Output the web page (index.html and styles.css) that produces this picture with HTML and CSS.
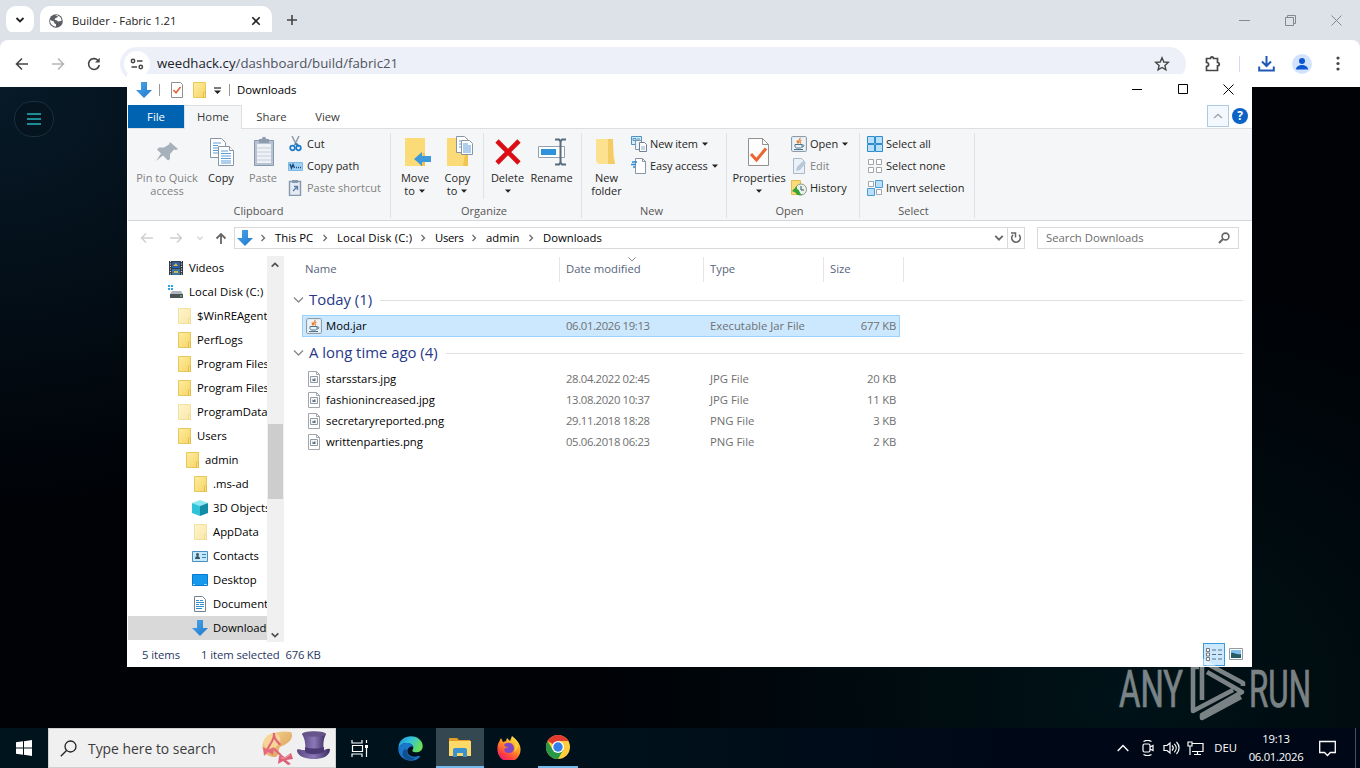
FILE: index.html
```html
<!DOCTYPE html>
<html lang="en">
<head>
<meta charset="utf-8">
<title>Builder - Fabric 1.21</title>
<link rel="stylesheet" href="styles.css">
</head>
<body>
<svg class="sprite" width="0" height="0">
  <defs>
    <linearGradient id="gFolder" x1="0" y1="0" x2="1" y2="1"><stop offset="0" stop-color="#ffeda3"/><stop offset="1" stop-color="#f6d463"/></linearGradient>
    <linearGradient id="gArrow" x1="0" y1="0" x2="1" y2="1"><stop offset="0" stop-color="#4ba6ea"/><stop offset="1" stop-color="#1f78cc"/></linearGradient>
    <linearGradient id="gEdge" x1="0" y1="0" x2="1" y2=".4"><stop offset="0" stop-color="#1b8fd8"/><stop offset=".5" stop-color="#31c2dc"/><stop offset="1" stop-color="#6be05a"/></linearGradient>
    <linearGradient id="gFox" x1=".8" y1="0" x2=".2" y2="1"><stop offset="0" stop-color="#fff04a"/><stop offset=".4" stop-color="#ff9a26"/><stop offset=".75" stop-color="#ff4040"/><stop offset="1" stop-color="#e3167c"/></linearGradient>
    <linearGradient id="gHat" x1="0" y1="0" x2="1" y2="0"><stop offset="0" stop-color="#5a4880"/><stop offset=".5" stop-color="#8c78b8"/><stop offset="1" stop-color="#3d2e60"/></linearGradient>
    <linearGradient id="gStraw" x1="0" y1="0" x2="1" y2="1"><stop offset="0" stop-color="#f8d999"/><stop offset="1" stop-color="#d79a4e"/></linearGradient>
  </defs>
  <symbol id="down" viewBox="0 0 16 16"><path d="M5 0h6v8h5l-8 8-8-8h5z" fill="url(#gArrow)"/></symbol>
  <symbol id="folder" viewBox="0 0 16 16"><path d="M2.500.5h12v15h-12z" fill="url(#gFolder)" stroke="#e9c85a"/><path d="M14.500 9.500l-2 1v5h2z" fill="#fbe28a" stroke="#dcb53c" stroke-width=".8"/></symbol>
  <symbol id="java" viewBox="0 0 16 16"><rect x=".6" y=".6" width="14.8" height="14.8" rx="1" fill="#eef3f7" stroke="#8193a3"/><path d="M9 1.700c1 2-3 2.800-1.400 5.600M10.500 4c-2 1-2 2-.6 3.500M6.500 4.500c-1 1 0 2 .5 3" fill="none" stroke="#e48230" stroke-width="1.200"/><path d="M4 8.500h7v2c0 1-1 1.500-2 1.500H6c-1 0-2-.5-2-1.500zM11 9c3-.5 2 2.200 0 2M3 13.500h9" fill="none" stroke="#4b7390"/></symbol>
  <symbol id="imgfile" viewBox="0 0 16 16"><path d="M2.500.5h8l3 3v12h-11z" fill="#fff" stroke="#a0a6ab"/><path d="M10.500.5v3h3" fill="none" stroke="#a0a6ab"/><path d="M4.500 5.500h7v6h-7z" fill="#f5f7f8" stroke="#919aa3"/><path d="M6.500 10V7.500l1.500 1V7.500h1.500V10z" fill="#60707e"/></symbol>
  <symbol id="caret" viewBox="0 0 7 4"><path d="M0 .5h6L3 3.800z" fill="#222"/></symbol>
  <symbol id="chev" viewBox="0 0 10 10"><path d="M3.500 2L6.500 5l-3 3" fill="none" stroke="#6b6b6b" stroke-width="1.300"/></symbol>
  <symbol id="drop" viewBox="0 0 12 12"><path d="M1 3.500L5.500 8 10 3.500" fill="none" stroke="currentColor" stroke-width="1.300"/></symbol>
</svg>

<div class="screen">
  <header class="tabs">
    <div class="tabsearch"><svg width="12" height="12" viewBox="0 0 12 12"><path d="M2.500 4L6 7.500 9.500 4" fill="none" stroke="#222" stroke-width="1.800"/></svg></div>
    <div class="tab">
      <svg class="globe" width="14" height="14" viewBox="0 0 14 14"><circle cx="7" cy="7" r="6.800" fill="#5a5d61"/><path d="M1 6l4 1.500.5 2L7 10v2.500C3.500 12.500 1 10 1 6zM6 2l3-.5c-.5 1.500-.5 2-2 2.500S5 6 6.500 6 8 7 9 7.500 11 6.500 12.600 7c0-3-1.500-5-4.600-5.500z" fill="#fff"/></svg>
      <span>Builder - Fabric 1.21</span>
      <svg class="tabclose" width="10" height="10" viewBox="0 0 10 10"><path d="M1.300 1.300l7.400 7.400M8.700 1.300L1.300 8.700" stroke="#222" stroke-width="1.600"/></svg>
    </div>
    <svg class="plus" width="12" height="12" viewBox="0 0 12 12"><path d="M6 1v10M1 6h10" stroke="#444" stroke-width="1.600"/></svg>
    <div class="caption">
      <svg width="11" height="11" viewBox="0 0 11 11"><path d="M0 5.500h11" stroke="#85898f"/></svg>
      <svg width="11" height="11" viewBox="0 0 11 11"><path d="M.5 2.500h8v8h-8zM2.500 2.500v-2h8v8h-2" fill="none" stroke="#85898f"/></svg>
      <svg width="11" height="11" viewBox="0 0 11 11"><path d="M.5.5l10 10M10.500.5l-10 10" stroke="#85898f"/></svg>
    </div>
  </header>
  <div class="toolbar">
    <svg width="14" height="14" viewBox="0 0 14 14"><path d="M13 7H2M7 1.500L1.500 7 7 12.500" fill="none" stroke="#444746" stroke-width="1.600"/></svg>
    <svg width="14" height="14" viewBox="0 0 14 14"><path d="M1 7h11M7 1.500L12.500 7 7 12.500" fill="none" stroke="#b5b7b8" stroke-width="1.600"/></svg>
    <svg width="14" height="14" viewBox="0 0 14 14"><path d="M12.300 8A5.400 5.400 0 1 1 10.800 3.200L12 4.500" fill="none" stroke="#444746" stroke-width="1.600"/><path d="M12.700.8v4.700H8z" fill="#444746"/></svg>
    <div class="omni">
      <div class="site"><svg width="14" height="12" viewBox="0 0 14 12"><g fill="none" stroke="#444746" stroke-width="1.500"><circle cx="3" cy="3" r="1.700"/><path d="M7 3h5.500M1.500 9H7"/><circle cx="10.800" cy="9" r="1.700"/></g></svg></div>
      <span class="url"><b>weedhack.cy</b>/dashboard/build/fabric21</span>
      <svg class="star" width="16" height="16" viewBox="0 0 16 16"><path d="M8 1.800l1.800 4.200 4.500.4-3.400 3 1 4.500L8 11.500l-3.900 2.400 1-4.500-3.400-3L6.200 6z" fill="none" stroke="#444746" stroke-width="1.400"/></svg>
    </div>
    <svg class="ext" width="18" height="18" viewBox="0 0 18 18"><path d="M2.500 3.500h4c0-2.300 3-2.300 3 0h4v4c2.400 0 2.400 3.300 0 3.300v4.700h-11v-4c2.800-.3 2.800-3.800 0-4z" fill="none" stroke="#444746" stroke-width="1.700"/></svg>
    <i class="bar"></i>
    <svg class="dl" width="17" height="17" viewBox="0 0 17 17"><path d="M8.500 1v9.500M4 6.500l4.500 4.500L13 6.500M1.200 11.500v4h14.600v-4" fill="none" stroke="#1f59b5" stroke-width="2"/></svg>
    <div class="avatar"><svg width="14" height="14" viewBox="0 0 14 14"><circle cx="7" cy="4" r="3" fill="#0b57d0"/><path d="M1 12.500c0-6 12-6 12 0z" fill="#0b57d0"/></svg></div>
    <svg class="dots" width="4" height="16" viewBox="0 0 4 16"><g fill="#444746"><circle cx="2" cy="2" r="1.600"/><circle cx="2" cy="7.500" r="1.600"/><circle cx="2" cy="13" r="1.600"/></g></svg>
  </div>

  <main class="page">
    <div class="menu"><svg width="14" height="12" viewBox="0 0 14 12"><path d="M0 1h14M0 6h14M0 11h14" stroke="#25b5c0" stroke-width="1.600"/></svg></div>
  </main>

  <section class="window">
    <div class="titlebar">
      <svg width="16" height="16"><use href="#down"/></svg><i></i>
      <svg class="t1" width="14" height="16" viewBox="0 0 14 16"><path d="M1.500.5h9l2 2v13h-11z" fill="#fff" stroke="#8f8f8f"/><path d="M3.500 8l2.500 2.700L10.500 5" fill="none" stroke="#e0623d" stroke-width="1.600"/></svg>
      <svg class="t2" width="16" height="16"><use href="#folder"/></svg>
      <svg class="t3" width="7" height="8" viewBox="0 0 7 8"><path d="M0 1h7" stroke="#222" stroke-width="1.200"/><path d="M0 3.500h7L3.500 7z" fill="#222"/></svg><i></i>
      <span>Downloads</span>
      <div class="caption wcap">
        <svg width="11" height="11" viewBox="0 0 11 11"><path d="M1 5.500h10" stroke="#000"/></svg>
        <svg width="11" height="11" viewBox="0 0 11 11"><path d="M1.500.5h9v9h-9z" fill="none" stroke="#000"/></svg>
        <svg width="11" height="11" viewBox="0 0 11 11"><path d="M.5.500l10 10M10.500.5l-10 10" stroke="#000"/></svg>
      </div>
    </div>
    <nav class="rtabs">
      <span class="file">File</span><span class="home">Home</span><span class="share">Share</span><span class="view">View</span>
      <div class="collapse"><svg width="10" height="6" viewBox="0 0 10 6"><path d="M1 5l4-3.500L9 5" fill="none" stroke="#9ba7b3" stroke-width="1.400"/></svg></div>
      <div class="help">?</div>
    </nav>
    <div class="ribbon">
      <div class="group g1">
        <div class="tools">
          <div class="big dim w66"><svg width="32" height="34" viewBox="0 0 32 34"><path d="M19 7l8 7-2 1-2-.5-4 4.500v5l-2 1.500-5-5L5 26l5-7.500-4-4 2-2h5l5-3z" fill="#a7b1bc"/></svg>Pin to Quick<br>access</div>
          <div class="big w42"><svg width="32" height="34" viewBox="0 0 32 34"><g fill="#fff" stroke="#8795a5"><path d="M5.500 3.500h11l4 4v15h-15z"/><path d="M13.500 11.500h11l4 4v15h-15z"/><path d="M24.500 11.500v4h4" /></g><path d="M8 8h8M8 10.500h5M8 13h5M8 15.500h5M8 18h5M16 16h7M16 18.500h10M16 21h10M16 23.500h10M16 26h10M16 28h10" stroke="#5c9ddb"/></svg>Copy</div>
          <div class="big dim w42"><svg width="32" height="34" viewBox="0 0 32 34"><path d="M7.500 5.500h19v25h-19z" fill="#b7c3d2" stroke="#8797ad"/><path d="M10 9h14v19H10z" fill="#eef1f6"/><path d="M10 13h14M10 17h14M10 21h14M10 25h14" stroke="#c3ceda"/><path d="M12 4h3c0-3 4-3 4 0h3v4H12z" fill="#8c9bb0"/></svg>Paste</div>
          <div class="smalls s1">
            <div><svg width="16" height="16" viewBox="0 0 16 16"><path d="M4 0l5 10M11 0L6 10" stroke="#8a98a6" stroke-width="1.400"/><path d="M7 8l2 0 2 2.500" stroke="#1979ca" fill="none" stroke-width="1.600"/><circle cx="4.500" cy="12" r="2.300" fill="none" stroke="#1979ca" stroke-width="1.700"/><circle cx="10.500" cy="12" r="2.300" fill="none" stroke="#1979ca" stroke-width="1.700"/></svg>Cut</div>
            <div><svg width="16" height="16" viewBox="0 0 16 16"><path d="M.5 4.500h14v8H.5z" fill="#9fd0f3" stroke="#7fb8e4"/><path d="M2 6l1.500 4L5 6.500 6.500 10M8 9.500h1M10 9.500h1M12 9.500h1" fill="none" stroke="#174d7b" stroke-width="1.400"/></svg>Copy path</div>
            <div class="dim"><svg width="16" height="16" viewBox="0 0 16 16"><path d="M1.500 1.500h11v14h-11z" fill="#e5ebf2" stroke="#8797ad" stroke-width="1.400"/><path d="M4 0h6v3H4z" fill="#8797ad"/><path d="M5 11l4-4M6 6.500h3.500V10" stroke="#5d7da7" fill="none" stroke-width="1.400"/></svg>Paste shortcut</div>
          </div>
        </div><footer>Clipboard</footer>
      </div>
      <div class="group g2">
        <div class="tools">
          <div class="big w42"><svg width="32" height="34" viewBox="0 0 32 34"><path d="M6 3h20v28H6z" fill="#fadb78"/><path d="M24 18h2v13h-5z" fill="#f0c650"/><path d="M15 24l8-7v4h9v6h-9v4z" fill="#3e99da"/></svg>Move<br>to <svg class="caret" width="7" height="4"><use href="#caret"/></svg></div>
          <div class="big w43"><svg width="32" height="34" viewBox="0 0 32 34"><path d="M5 3h21v28H5z" fill="#fadb78"/><path d="M23 19h3v12h-5z" fill="#f0c650"/><g fill="#fff" stroke="#8795a5"><path d="M14.500 1.500h8l3 3v13h-11z"/><path d="M19.500 5.500h8l3 3v11h-11z"/></g><path d="M17 6h2M17 9h2M17 12h2M21 9h5M21 11h8M21 13h8M21 15h8M21 17h8" stroke="#5c9ddb"/></svg>Copy<br>to <svg class="caret" width="7" height="4"><use href="#caret"/></svg></div>
          <i class="isep"></i>
          <div class="big w43"><svg width="32" height="34" viewBox="0 0 32 34"><path d="M5 6l22 22M27 6L5 28" stroke="#db0d15" stroke-width="4.600"/></svg>Delete<br><svg class="caret" width="7" height="4"><use href="#caret"/></svg></div>
          <div class="big w45"><svg width="32" height="34" viewBox="0 0 32 34"><path d="M2.500 11.500h26v11h-26z" fill="#fff" stroke="#929fac"/><path d="M5 14h15v6H5z" fill="#2e91dc"/><path d="M19 4.500h4l1.500 2L26 4.500h4M19 29.500h4l1.500-2 1.500 2h4M24.500 6v22" stroke="#596b7b" stroke-width="2" fill="none"/></svg>Rename</div>
        </div><footer>Organize</footer>
      </div>
      <div class="group g3">
        <div class="tools">
          <div class="big w43"><svg width="32" height="34" viewBox="0 0 32 34"><path d="M5 4h17l1 16 1 9H7l-2-3z" fill="#fce191"/><path d="M17 4h5v16l2 9h-7z" fill="#f4cc65"/></svg>New<br>folder</div>
          <div class="smalls s3">
            <div><svg width="16" height="16" viewBox="0 0 16 16"><path d="M.5.5h10v8H.5z" fill="#d9edf9" stroke="#4b93c7"/><path d="M2 2.500h3v2H2zM6 3h3" stroke="#4b93c7" fill="none"/><path d="M4.500 4.500h6v9h-6z" fill="#edf4f9" stroke="#8495a5"/><path d="M8.500 6.500h5l2 2v7h-7z" fill="#fff" stroke="#6e8193"/><path d="M10 11h4M10 13h4" stroke="#8aaecb"/></svg>New item <svg class="caret" width="7" height="4"><use href="#caret"/></svg></div>
            <div><svg width="16" height="16" viewBox="0 0 16 16"><path d="M4.500.5h7l3 3v12h-10z" fill="#fff" stroke="#8795a5"/><path d="M11.500.5v3h3" fill="none" stroke="#8795a5"/><path d="M1 4h5M0 6.500h5M2 9h2" stroke="#2a8ad4" stroke-width="1.400"/></svg>Easy access <svg class="caret" width="7" height="4"><use href="#caret"/></svg></div>
          </div>
        </div><footer>New</footer>
      </div>
      <div class="group g4">
        <div class="tools">
          <div class="big w56"><svg width="32" height="34" viewBox="0 0 32 34"><path d="M5.500 3.500h14l6 6v21h-20z" fill="#fdfdfd" stroke="#929292"/><path d="M19.500 3.500v6h6" fill="none" stroke="#929292"/><path d="M8 19l5.500 6L23 13.500" fill="none" stroke="#ec6530" stroke-width="3"/></svg>Properties<br><svg class="caret" width="7" height="4"><use href="#caret"/></svg></div>
          <div class="smalls s4">
            <div><svg width="16" height="16"><use href="#java"/></svg>Open <svg class="caret" width="7" height="4"><use href="#caret"/></svg></div>
            <div class="dim"><svg width="16" height="16" viewBox="0 0 16 16"><path d="M2.500.5h8l3 3v12h-11z" fill="#eaf1f8" stroke="#abb9c7"/><path d="M5 13l1-4 6-6 3 2-6 7z" fill="#b8c8d8"/></svg>Edit</div>
            <div><svg width="16" height="16" viewBox="0 0 16 16"><path d="M.5.5h9v14h-9z" fill="#fbdb78" stroke="#e4bd4e"/><circle cx="10" cy="9.500" r="5.500" fill="#e9f1e8" stroke="#8b9a8b"/><path d="M10 6v4h3" fill="none" stroke="#34556e"/><path d="M1 11l5-5v3c3 1 2 4 5 6-5 1-6-1-6-2z" fill="#36a23a"/></svg>History</div>
          </div>
        </div><footer>Open</footer>
      </div>
      <div class="group g5">
        <div class="tools">
          <div class="smalls s5">
            <div><svg width="16" height="16" viewBox="0 0 16 16"><path d="M.5.5h7v7h-7zM8.500.5h7v7h-7zM.5 8.500h7v7h-7zM8.500 8.500h7v7h-7z" fill="#b8e0fa" stroke="#2f8dcc"/></svg>Select all</div>
            <div><svg width="16" height="16" viewBox="0 0 16 16"><path d="M1.500 1.500h5v5h-5zM9.500 1.500h5v5h-5zM1.500 9.500h5v5h-5zM9.500 9.500h5v5h-5z" fill="#fff" stroke="#a2a6aa"/></svg>Select none</div>
            <div><svg width="16" height="16" viewBox="0 0 16 16"><path d="M1.500 1.500h5v5h-5zM9.500 9.500h5v5h-5z" fill="#fff" stroke="#a2a6aa"/><path d="M8.500.5h7v7h-7zM.5 8.500h7v7h-7z" fill="#b8e0fa" stroke="#4a9dd4"/></svg>Invert selection</div>
          </div>
        </div><footer>Select</footer>
      </div>
    </div>

    <div class="addr">
      <svg class="a1" width="14" height="12" viewBox="0 0 14 12"><path d="M13 6H2M6 1.500L1.500 6 6 10.500" fill="none" stroke="#cfcfcf" stroke-width="1.400"/></svg>
      <svg class="a2" width="14" height="12" viewBox="0 0 14 12"><path d="M1 6h11M8 1.500L12.500 6 8 10.500" fill="none" stroke="#cfcfcf" stroke-width="1.400"/></svg>
      <svg class="a3" width="8" height="8" viewBox="0 0 12 12"><path d="M2 4l4 4 4-4" fill="none" stroke="#ccc" stroke-width="1.800"/></svg>
      <svg class="a4" width="12" height="13" viewBox="0 0 12 13"><path d="M6 12V2M1.500 6.500L6 2l4.500 4.500" fill="none" stroke="#666" stroke-width="1.800"/></svg>
      <div class="path">
        <svg width="16" height="16"><use href="#down"/></svg>
        <svg class="ch c0" width="10" height="10"><use href="#chev"/></svg><span class="p1">This PC</span>
        <svg class="ch" width="10" height="10"><use href="#chev"/></svg><span class="p2">Local Disk (C:)</span>
        <svg class="ch" width="10" height="10"><use href="#chev"/></svg><span class="p3">Users</span>
        <svg class="ch" width="10" height="10"><use href="#chev"/></svg><span class="p4">admin</span>
        <svg class="ch" width="10" height="10"><use href="#chev"/></svg><span>Downloads</span>
        <svg class="pd" width="10" height="10" viewBox="0 0 12 12"><path d="M1.500 3.500L6 8l4.500-4.500" fill="none" stroke="#666" stroke-width="2.200"/></svg>
        <div class="refresh"><svg width="12" height="12" viewBox="0 0 12 12"><path d="M9 2.800A4.300 4.300 0 1 1 3 2.800" fill="none" stroke="#666" stroke-width="1.600"/><path d="M1 1h4.500v4.500" fill="none" stroke="#666" stroke-width="1.500"/></svg></div>
      </div>
      <div class="search"><span>Search Downloads</span><svg width="12" height="12" viewBox="0 0 12 12"><circle cx="7.500" cy="4.500" r="3.400" fill="none" stroke="#666" stroke-width="1.600"/><path d="M5 7L1 11" stroke="#666" stroke-width="2"/></svg></div>
    </div>

    <div class="body">
      <aside class="tree">
        <div class="l0"><svg width="16" height="16" viewBox="0 0 16 16"><path d="M1 1h14v14H1z" fill="#343e49"/><path d="M4 2h8v6H4z" fill="#315ea2"/><path d="M4 9h8v6H4z" fill="#3c78a0"/><path d="M5 6l3-3 2 3zM6 11h4v2H6z" fill="#d5b24c"/><path d="M2.500 1v14M13.500 1v14" stroke="#ddd" stroke-dasharray="1 1.500"/></svg>Videos</div>
        <div class="l0 disk"><svg width="16" height="16" viewBox="0 0 16 16"><path d="M0 1h2v2H0zM3 1h2v2H3zM0 4h2v2H0zM3 4h2v2H3z" fill="#28a5e4"/><path d="M4 7h9l2 3v3H2v-3z" fill="#aeb6bd"/><path d="M2 10h13v4H2z" fill="#4c5358"/><path d="M12 12h2" stroke="#64e27a"/></svg>Local Disk (C:)</div>
        <div class="l1 faded"><svg width="16" height="16"><use href="#folder"/></svg>$WinREAgent</div>
        <div class="l1"><svg width="16" height="16"><use href="#folder"/></svg>PerfLogs</div>
        <div class="l1"><svg width="16" height="16"><use href="#folder"/></svg>Program Files</div>
        <div class="l1"><svg width="16" height="16"><use href="#folder"/></svg>Program Files</div>
        <div class="l1 faded"><svg width="16" height="16"><use href="#folder"/></svg>ProgramData</div>
        <div class="l1"><svg width="16" height="16"><use href="#folder"/></svg>Users</div>
        <div class="l2"><svg width="16" height="16"><use href="#folder"/></svg>admin</div>
        <div class="l3"><svg width="16" height="16"><use href="#folder"/></svg>.ms-ad</div>
        <div class="l3"><svg width="16" height="16" viewBox="0 0 16 16"><path d="M0 3l8-3 8 3-8 3z" fill="#8ce8f0"/><path d="M0 3l8 3v10l-8-3z" fill="#30c2d8"/><path d="M16 3L8 6v10l8-3z" fill="#128ca6"/></svg>3D Objects</div>
        <div class="l3 faded"><svg width="16" height="16"><use href="#folder"/></svg>AppData</div>
        <div class="l3"><svg width="16" height="16" viewBox="0 0 16 16"><path d="M.5 3.500h15v10H.5z" fill="#c7e8f8" stroke="#4a91c1"/><circle cx="5.500" cy="6.500" r="1.500" fill="#365567"/><path d="M3 11c0-4 5-4 5 0z" fill="#365567"/><path d="M10 6.500h4M10 9.500h4" stroke="#3b84b9"/></svg>Contacts</div>
        <div class="l3"><svg width="16" height="16" viewBox="0 0 16 16"><path d="M.5 2.500h15v11H.5z" fill="#1599ed" stroke="#087bd0"/><path d="M1 12.500h2M12 12.500h3" stroke="#9bdcff"/></svg>Desktop</div>
        <div class="l3"><svg width="16" height="16" viewBox="0 0 16 16"><path d="M2.500.5h8l3 3v12h-11z" fill="#fff" stroke="#73828f"/><path d="M4 4.500h3M4 6.500h8M4 8.500h3M4 10.500h8M4 12.500h6M8 4.500h3M8 8.500h4" stroke="#368fca"/></svg>Documents</div>
        <div class="l3 sel"><svg width="16" height="16"><use href="#down"/></svg>Downloads</div>
      </aside>
      <div class="scroll">
        <svg width="10" height="10" viewBox="0 0 12 12"><path d="M2 8l4-4 4 4" fill="none" stroke="#505050" stroke-width="2"/></svg>
        <div class="thumb"></div>
        <svg width="10" height="10" viewBox="0 0 12 12"><path d="M2 4l4 4 4-4" fill="none" stroke="#505050" stroke-width="2"/></svg>
      </div>
      <div class="files">
        <div class="cols"><span>Name</span><span>Date modified<svg width="8" height="5" viewBox="0 0 8 5"><path d="M.5.500L4 4 7.500.5" fill="none" stroke="#888"/></svg></span><span>Type</span><span>Size</span></div>
        <h2><svg width="12" height="12"><use href="#drop"/></svg><span>Today (1)</span></h2>
        <div class="row selrow"><span class="n"><svg width="16" height="16"><use href="#java"/></svg>Mod.jar</span><span>06.01.2026 19:13</span><span>Executable Jar File</span><span>677 KB</span></div>
        <h2 class="second"><svg width="12" height="12"><use href="#drop"/></svg><span>A long time ago (4)</span></h2>
        <div class="row"><span class="n"><svg width="16" height="16"><use href="#imgfile"/></svg>starsstars.jpg</span><span>28.04.2022 02:45</span><span>JPG File</span><span>20 KB</span></div>
        <div class="row"><span class="n"><svg width="16" height="16"><use href="#imgfile"/></svg>fashionincreased.jpg</span><span>13.08.2020 10:37</span><span>JPG File</span><span>11 KB</span></div>
        <div class="row"><span class="n"><svg width="16" height="16"><use href="#imgfile"/></svg>secretaryreported.png</span><span>29.11.2018 18:28</span><span>PNG File</span><span>3 KB</span></div>
        <div class="row"><span class="n"><svg width="16" height="16"><use href="#imgfile"/></svg>writtenparties.png</span><span>05.06.2018 06:23</span><span>PNG File</span><span>2 KB</span></div>
      </div>
    </div>
    <div class="status"><span>5 items</span><span class="st2">1 item selected</span><span class="st3">676 KB</span>
      <div class="vmode on"><svg width="18" height="15" viewBox="0 0 18 15"><path d="M1.500 1.500h3v3h-3zM1.500 6h3v3h-3zM1.500 10.500h3v3h-3z" fill="#fff" stroke="#777"/><path d="M7 3h4M7 7.500h4M7 12h4M13 3h4M13 7.500h4M13 12h4" stroke="#55718a"/></svg></div>
      <svg class="vm2" width="14" height="12" viewBox="0 0 14 12"><path d="M.5.500h13v11H.5z" fill="#fff" stroke="#939ca4"/><path d="M2 2h10v8H2z" fill="#7fc1ec"/><path d="M2 5c3-1 5 2 10 1v4H2z" fill="#285c64"/></svg>
    </div>
  </section>

  <svg class="watermark" width="200" height="70" viewBox="0 0 200 70">
    <g fill="#fff" stroke="#fff" stroke-width=".7" font-family="Roboto, sans-serif" font-size="51"><text x="4" y="51" textLength="64" lengthAdjust="spacingAndGlyphs">ANY</text><text x="134" y="51" textLength="62" lengthAdjust="spacingAndGlyphs">RUN</text></g>
    <path d="M84 11h-6v44l40-21M87 44V5l41 22v3M92 16l35 20-40 23v3l39-21" fill="none" stroke="#fff" stroke-width="4.600" stroke-linejoin="round"/>
  </svg>

  <div class="taskbar">
    <div class="start"><svg width="16" height="16" viewBox="0 0 16 16"><path d="M0 2.300L7 1.300v6.200H0zM8 1.200L16 0v7.500H8zM0 8.500h7v6.200l-7-1zM8 8.500h8V16l-8-1.200z" fill="#fff"/></svg></div>
    <div class="tsearch"><svg width="17" height="17" viewBox="0 0 17 17"><circle cx="10.500" cy="6.500" r="5.500" fill="none" stroke="#222" stroke-width="1.300"/><path d="M6.500 10.500L.8 16.200" stroke="#222" stroke-width="1.300"/></svg><span>Type here to search</span>
      <svg class="hats" width="72" height="36" viewBox="0 0 72 36">
        <path d="M3 13C6 3 20 0 31 2c4 6-3 12-11 15-3 5-1 10-5 10C8 27 0 22 3 13z" fill="url(#gStraw)"/><ellipse cx="12" cy="11" rx="9" ry="7" transform="rotate(-35 12 11)" fill="#f6d596"/><path d="M14 3c-1 7 5 9 6 12M14 3c1 8-6 12-7 18" fill="none" stroke="#e0677b" stroke-width="2.200"/><path d="M3 17l5 3 6-3-1 8-5-3-4 4z" fill="#e6687e"/><path d="M14 19c5 3 6 7 10 9" fill="none" stroke="#e0677b" stroke-width="2.200"/><path d="M19 26l6 1 6-4 2 6-7 1 5 4-3 1-5-4-5 3z" fill="#dd6077"/><path d="M21 28l4 0 5-3" fill="none" stroke="#f5a5b0"/>
        <path d="M37 21c0-3 3-1 5-1h22c4-1 6-2 6 0-1 7-9 9-16 9s-16-2-17-8z" fill="url(#gHat)"/><path d="M42 4c4-3 19-3 24 0-3 6-3 11-2 18-4 4-15 4-19 1 1-8 0-14-3-19z" fill="url(#gHat)"/><ellipse cx="54" cy="4" rx="12" ry="2.800" fill="#66558a"/><path d="M45 17c5 2 14 2 19 0v4c-4 4-15 4-19 1z" fill="#4a3973"/>
      </svg>
    </div>
    <div class="app"><svg width="18" height="17" viewBox="0 0 18 17"><path d="M1 0v3h10V0M1 17v-3h10v3M1.500 5.500h10v6h-10zM15.500 0v3M15.500 8v9" fill="none" stroke="#fff" stroke-width="1.200"/><path d="M14 5h3v3h-3z" fill="#fff"/></svg></div>
    <div class="app edge"><svg width="25" height="25" viewBox="0 0 25 25"><path d="M.5 11C1 4 7 .3 13 .3c7 0 12 5 11.700 10 0 4-3 6-7 6-3 0-4-1.300-3-2.500C17 10 13 7 9 7 5 7 1.500 9 .5 13z" fill="url(#gEdge)"/><path d="M.3 13C1 9 5 7 9 7c3 0 6 2 6.400 4-2-1.500-6 .5-6 4 0 4 5 7 11 5 1-.4 2 .3 1.500 1C19 24.500 15 25 12 24.700 5 24.200.3 19 .3 13z" fill="#1a76c8"/><path d="M9.400 15c-1 4 3 7 8 7-3 3-8 3-11 0s-2-8 1-9z" fill="#105090"/></svg></div>
    <div class="app active"><svg width="22" height="19" viewBox="0 0 22 19"><path d="M0 1c0-.6.4-1 1-1h7l2 2h11v4H0z" fill="#e49c27"/><path d="M0 3h22v15H0z" fill="#ffd968"/><path d="M4 19v-7c0-1 .5-2 2-2h10c1.500 0 2 1 2 2v7h-4v-4H8v4z" fill="#3b92d0"/></svg></div>
    <div class="app"><svg width="24" height="24" viewBox="0 0 24 24"><path d="M2 6l2-4 2 4 3-1 1-3 3 3 2-5c4 3 9 8 8.500 14A11.500 11.500 0 0 1 .5 14C.3 11 .6 8 2 6z" fill="url(#gFox)"/><path d="M7 9c2-3 7-3 9 0s1 8-4 8-6-4-3-5l3-1c-2 0-4 0-5-2z" fill="#8047c6"/><path d="M14 5c4 1 6 6 3 11 2-1 4-4 3.500-7z" fill="#ffd43b"/></svg></div>
    <div class="app run"><svg width="24" height="24" viewBox="0 0 24 24"><circle cx="12" cy="12" r="12" fill="#ffcd3d"/><path d="M12 12L1.600 6A12 12 0 0 1 22.400 6H12z" fill="#e33b2e"/><path d="M1.600 6A12 12 0 0 0 12 24l5.200-9L12 12 6.800 15z" fill="#279847"/><circle cx="12" cy="12" r="6" fill="#fff"/><circle cx="12" cy="12" r="4.700" fill="#347fe8"/></svg></div>
    <div class="tray">
      <svg class="y1" width="12" height="8" viewBox="0 0 12 8"><path d="M.7 7L6 1.500 11.300 7" fill="none" stroke="#fff" stroke-width="1.400"/></svg>
      <svg class="y2" width="12" height="16" viewBox="0 0 12 16"><g fill="none" stroke="#fff" stroke-width="1.200"><rect x="1" y="4" width="7" height="8" rx="1.500"/><path d="M8 7l3-1.500v5L8 9M1.500 1.500C4 0 7 0 9.500 1.500M1.500 14.500c2.500 1.500 5.500 1.500 8 0"/></g></svg>
      <svg class="y3" width="17" height="14" viewBox="0 0 17 14"><path d="M1 4.500h3L7 2v10L4 9.500H1zM9 4.500c1.500 1.500 1.500 3.500 0 5M11.300 2.800c2.500 2.500 2.500 6 0 8.500M13.500 1c3.400 3.500 3.400 8.500 0 12" fill="none" stroke="#fff" stroke-width="1.200"/></svg>
      <svg class="y4" width="17" height="15" viewBox="0 0 17 15"><path d="M5 2.500h11v8H5M7 13.500h7M10.500 10.500v3M1 1h4v4H1zM3 5v9" fill="none" stroke="#fff" stroke-width="1.200"/></svg>
      <span class="lang">DEU</span>
      <div class="clock"><span>19:13</span><span>06.01.2026</span></div>
      <svg class="y5" width="17" height="17" viewBox="0 0 17 17"><path d="M.7 1.500h15.600v11h-5L8.500 15.500l-3-3H.7z" fill="none" stroke="#fff" stroke-width="1.300"/></svg>
      <i class="peek"></i>
    </div>
  </div>
</div>
</body>
</html>
```

FILE: styles.css
```css
* { box-sizing: border-box; }
body { margin: 0; font-family: "Open Sans", "Noto Sans", sans-serif; font-size: 11.3px; color: #000; }
svg { display: block; flex: none; }
.sprite { position: absolute; }
span { white-space: nowrap; }
.screen { position: relative; width: 1360px; height: 768px; overflow: hidden; display: flex; flex-direction: column; background: #000; }

/* browser */
.tabs { height: 40px; background: #dde1e8; display: flex; align-items: flex-end; flex: none; }
.tabsearch { width: 28px; height: 28px; margin: 0 6px 6px 6px; border-radius: 10px; background: #fff; display: flex; align-items: center; justify-content: center; }
.tab { width: 232px; height: 34px; border-radius: 10px 10px 0 0; background: #fff; display: flex; align-items: center; padding: 0 11px 5px 9px; color: #222; }
.tab span { margin-left: 9px; font-size: 11.3px; }
.tabclose { margin-left: auto; }
.plus { margin: 0 0 14px 14px; }
.caption { display: flex; gap: 35px; margin: 0 18px 14px auto; }
.toolbar { height: 47px; background: #fff; border-radius: 8px 8px 0 0; display: flex; align-items: center; padding-left: 15px; gap: 22px; flex: none; box-shadow: 0 -8px 0 0 #dde1e8; }
.omni { width: 1066px; height: 34px; border-radius: 17px; background: #edf0f9; display: flex; align-items: center; padding: 0 16px 0 4px; margin-left: -3px; }
.site { width: 26px; height: 26px; border-radius: 50%; background: #fff; display: flex; align-items: center; justify-content: center; }
.url { font-size: 13.25px; margin-left: 7px; padding-bottom: 2px; color: #50545b; }
.url b { font-weight: 400; color: #202226; }
.star { margin-left: auto; }
.ext { margin-left: -4px; }
.bar { width: 1px; height: 16px; background: #d0daee; margin-left: -5px; }
.dl { margin-left: -4px; }
.avatar { width: 20px; height: 20px; border-radius: 50%; background: #d3e3fd; display: flex; align-items: center; justify-content: center; margin-left: -5px; }
.dots { margin-left: 2px; }
.page { height: 641px; flex: none; background: radial-gradient(ellipse 500px 420px at 0 0, #071a28, transparent), radial-gradient(ellipse 520px 420px at 1130px 610px, #001318, transparent), #000206; padding: 14px; }
.menu { width: 40px; height: 36px; border-radius: 20px; border: 1px solid #19303d; background: #06141f; display: flex; align-items: center; justify-content: center; }

/* explorer window */
.window { position: absolute; left: 127px; top: 74px; width: 1125px; height: 593px; background: #fff; display: flex; flex-direction: column; padding-left: 1px; }
.titlebar { height: 31px; display: flex; align-items: center; padding-left: 8px; flex: none; }
.titlebar i { width: 1px; height: 12px; background: #999; margin: 0 7px; }
.titlebar .t1 { margin-left: 3px; }
.titlebar .t2 { margin-left: 7px; }
.titlebar .t3 { margin: 2px 1px 0 7px; }
.titlebar span { font-size: 11.4px; }
.titlebar .wcap { margin: 0 18px 0 auto; }
.rtabs { height: 24px; display: flex; align-items: stretch; flex: none; border-bottom: 1px solid #dcdfe3; color: #3a3a3a; }
.rtabs span { display: flex; align-items: center; justify-content: center; }
.file { width: 56px; background: #0063b1; color: #fff; height: 23px; }
.home { width: 58px; background: #f5f6f7; border: 1px solid #dcdfe3; border-width: 1px 1px 0; height: 24px; padding-bottom: 2px; }
.share { width: 59px; }
.view { width: 53px; }
.collapse { width: 22px; height: 22px; border: 1px solid #a9cbe6; background: #f2f8fd; margin: 0 3px 0 auto; display: flex; align-items: center; justify-content: center; }
.help { width: 16px; height: 16px; border-radius: 50%; background: #0b63c5; color: #fff; font-weight: 700; font-size: 12px; line-height: 16px; text-align: center; margin: 3px 4px 0 0; }
.ribbon { height: 92px; background: #f5f6f7; border-bottom: 1px solid #d5d7da; display: flex; flex: none; color: #262626; font-size: 11px; padding-top: 4px; }
.group { height: 85px; border-right: 1px solid #e0e2e5; display: flex; flex-direction: column; }
.tools { display: flex; height: 66px; flex: none; }
.group footer { text-align: center; line-height: 24px; color: #555; }
.g1 { width: 263px; padding-left: 6px; }
.g1 footer { margin-left: -7px; }
.g2 { width: 191px; padding-left: 3px; }
.g2 footer { margin-left: -7px; }
.g3 { width: 145px; padding-left: 3px; }
.g3 footer { margin-left: -8px; }
.g4 { width: 133px; padding-left: 4px; }
.g4 footer { margin-left: -11px; }
.g5 { width: 115px; padding-left: 7px; }
.g5 footer { margin-left: -14px; }
.big { text-align: center; line-height: 13px; flex: none; white-space: nowrap; padding-top: 2px; }
.big > svg:first-child { margin: 0 auto 2px; }
.w66 { width: 66px; } .w42 { width: 42px; } .w43 { width: 43px; } .w45 { width: 45px; } .w56 { width: 56px; }
.dim { color: #828282; }
.caret { display: inline-block; vertical-align: 2px; margin-left: 1px; }
.isep { width: 1px; margin: 0 2px 0 4px; background: #e0e2e5; }
.smalls > div { height: 22px; display: flex; align-items: center; gap: 3px; white-space: nowrap; padding-bottom: 2px; }
.smalls svg:first-child { margin-top: 2px; }
.smalls .caret { margin: 2px 0 0 1px; }
.s1 { margin-left: 4px; }
.s3 { margin-left: 3px; letter-spacing: -.15px; }
.s4 { margin-left: 4px; }

.addr { height: 35px; display: flex; align-items: center; flex: none; padding-bottom: 1px; }
.a1 { margin-left: 12px; } .a2 { margin-left: 15px; } .a3 { margin-left: 13px; } .a4 { margin: 0 7px 0 11px; }
.path { width: 791px; height: 22px; border: 1px solid #d9d9d9; display: flex; align-items: center; padding-left: 2px; }
.path span, .search span { padding-bottom: 1px; }
.path .ch { margin: 0 7px 0 6px; }
.path .c0 { margin-left: 5px; }
.p1 { width: 39px; } .p2 { width: 75px; letter-spacing: .2px; } .p3 { width: 28px; letter-spacing: -.3px; } .p4 { width: 34px; }
.path .pd { margin-left: auto; margin-right: 3px; }
.refresh { width: 17px; height: 20px; border-left: 1px solid #d9d9d9; display: flex; align-items: center; justify-content: center; }
.search { width: 202px; height: 22px; margin-left: 12px; border: 1px solid #d9d9d9; display: flex; align-items: center; justify-content: space-between; padding: 0 8px; color: #6d6d6d; }
.body { height: 386px; display: flex; flex: none; }
.tree { width: 139px; overflow: hidden; flex: none; }
.tree div { height: 24px; display: flex; align-items: center; gap: 5px; white-space: nowrap; padding-bottom: 2px; }
.tree svg { margin-top: 2px; }
.disk { letter-spacing: .15px; }
.l0 { padding-left: 40px; } .l1 { padding-left: 48px; } .l2 { padding-left: 56px; } .l3 { padding-left: 64px; }
.faded svg { opacity: .55; }
.tree .sel { background: #d9d9d9; }
.scroll { width: 17px; background: #f0f0f0; display: flex; flex-direction: column; align-items: center; padding: 4px 1px 2px 0; flex: none; }
.thumb { width: 15px; height: 75px; background: #cdcdcd; margin: 154px 0 auto; }
.files { flex: 1; padding: 1px 9px 0 9px; }
.cols { display: flex; height: 25px; color: #56647a; line-height: 24px; padding-left: 12px; }
.cols span { border-right: 1px solid #e5e5e5; position: relative; }
.cols span:nth-child(1) { width: 255px; } .cols span:nth-child(2) { width: 144px; padding-left: 6px; } .cols span:nth-child(3) { width: 120px; padding-left: 6px; } .cols span:nth-child(4) { width: 80px; padding-left: 6px; }
.cols svg { position: absolute; left: 68px; top: 0; }
h2 { margin: 3px 0 0; height: 30px; display: flex; align-items: center; gap: 4px; font-size: 14.9px; font-weight: 400; color: #27388a; }
h2 span { padding-bottom: 2px; }
h2 svg { color: #888; }
h2::after { content: ""; height: 1px; flex: 1; background: #e0e0e0; margin-left: 4px; }
h2.second { margin-top: 1px; }
.row { width: 598px; height: 21px; margin-left: 9px; padding: 0 4px; display: flex; align-items: center; color: #707070; }
.row span { width: 144px; } .row span.n { width: 260px; display: flex; gap: 4px; color: #000; }
.row span:nth-child(2) { letter-spacing: -.36px; }
.row span:nth-child(3) { width: 120px; } .row span:nth-child(4) { width: 66px; text-align: right; letter-spacing: -.2px; }
.selrow { height: 22px; background: #cce8ff; box-shadow: inset 0 0 0 1px #99d1ff; }
.selrow span:not(.n) { padding-bottom: 2px; }
.status { flex: 1; display: flex; align-items: center; padding-left: 14px; color: #29375f; letter-spacing: -.07px; }
.st2 { margin-left: 21px; } .st3 { margin-left: 6px; letter-spacing: -.25px; }
.vmode { width: 22px; height: 23px; border: 1px solid #3d9ad8; background: #cce8ff; margin-left: auto; display: flex; align-items: center; justify-content: center; }
.vm2 { margin: 0 9px 2px 4px; }
.watermark { position: absolute; left: 1115px; top: 656px; opacity: .48; }

/* taskbar */
.taskbar { height: 40px; flex: none; display: flex; background: linear-gradient(90deg, #00141d, #00111b 45%, #000817 75%); color: #fff; }
.start { width: 48px; display: flex; align-items: center; justify-content: center; }
.tsearch { width: 288px; background: #f0f0f0; border: 1px solid #d0d0d0; display: flex; align-items: center; padding: 0 3px 0 11px; color: #3c3c3c; }
.tsearch span { font-size: 13.9px; margin-left: 11px; }
.hats { margin-left: auto; }
.app { width: 48px; display: flex; align-items: center; justify-content: center; }
.app.edge { width: 52px; padding-left: 1px; }
.app.active { width: 48px; background: #334850; border-bottom: 2px solid #76b9ed; }
.app.active + .app { width: 49px; }
.app.run { border-bottom: 2px solid #76b9ed; width: 40px; margin-left: 5px; }
.tray { margin-left: auto; display: flex; align-items: center; }
.y2 { margin-left: 13px; } .y3 { margin-left: 9px; } .y4 { margin-left: 7px; }
.lang { margin-left: 10px; font-size: 11.3px; padding-bottom: 1px; }
.clock { width: 58px; margin-left: 10px; display: flex; flex-direction: column; align-items: center; line-height: 18px; font-size: 11.3px; }
.clock span { letter-spacing: -.3px; }
.y5 { margin-left: 14px; }
.peek { width: 1px; height: 40px; background: #46505e; margin: 0 4px 0 19px; }
```
